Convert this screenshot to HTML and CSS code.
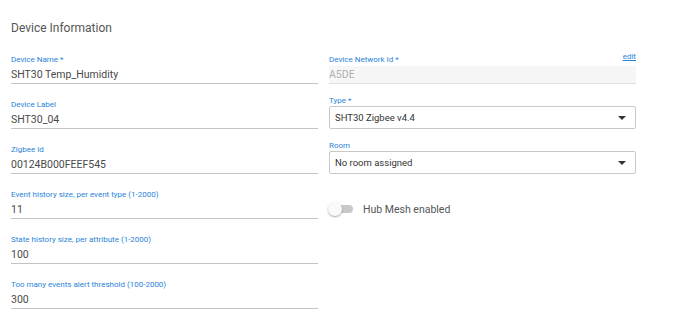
FILE: index.html
```html
<!DOCTYPE html>
<html>
<head>
<meta charset="utf-8">
<link rel="stylesheet" href="styles.css">
</head>
<body>
<div class="page">
  <h2 class="title">Device Information</h2>
  <div class="grid">
    <div class="col">
      <div class="field">
        <div class="label">Device Name *</div>
        <div class="value">SHT30 Temp_Humidity</div>
      </div>
      <div class="field">
        <div class="label">Device Label</div>
        <div class="value">SHT30_04</div>
      </div>
      <div class="field">
        <div class="label">Zigbee Id</div>
        <div class="value">00124B000FEEF545</div>
      </div>
      <div class="field">
        <div class="label">Event history size, per event type (1-2000)</div>
        <div class="value">11</div>
      </div>
      <div class="field">
        <div class="label">State history size, per attribute (1-2000)</div>
        <div class="value">100</div>
      </div>
      <div class="field">
        <div class="label">Too many events alert threshold (100-2000)</div>
        <div class="value">300</div>
      </div>
    </div>
    <div class="col">
      <div class="field first">
        <div class="label-row">
          <div class="label">Device Network Id *</div>
          <a class="edit" href="#">edit</a>
        </div>
        <div class="value readonly">A5DE</div>
      </div>
      <div class="sfield">
        <div class="label">Type *</div>
        <div class="select"><span>SHT30 Zigbee v4.4</span><span class="caret"></span></div>
      </div>
      <div class="sfield">
        <div class="label">Room</div>
        <div class="select"><span>No room assigned</span><span class="caret"></span></div>
      </div>
      <div class="toggle-row">
        <div class="switch"><div class="track"></div><div class="knob"></div></div>
        <span class="toggle-text">Hub Mesh enabled</span>
      </div>
    </div>
  </div>
</div>
</body>
</html>
```
FILE: styles.css
```css
* { box-sizing: border-box; }
html, body { margin: 0; padding: 0; background: #fff; }
body { font-family: Roboto, "Noto Sans", sans-serif; color: #444; }
.page { padding: 18px 0 0 11px; }
.title {
  margin: 0;
  font-size: 12px;
  font-weight: 400;
  line-height: 20px;
  color: #555;
}
.grid {
  display: grid;
  grid-template-columns: 307px 307px;
  column-gap: 11px;
  margin-top: 16px;
  align-items: start;
}
.col { display: flex; flex-direction: column; }
.field { height: 45px; }
.col .field.first { height: 30px; }
.label {
  font-size: 8px;
  line-height: 12px;
  color: #2a84d8;
}
.label-row { display: flex; justify-content: space-between; height: 12px; }
.edit {
  font-size: 8px;
  line-height: 12px;
  color: #2a84d8;
  margin-top: -3px;
}
.value {
  height: 18px;
  font-size: 10.5px;
  line-height: 17px;
  color: #4a4a4a;
  border-bottom: 1px solid #c4c4c4;
}
.value.readonly {
  background: #f6f6f6;
  color: #b0b0b0;
  border-bottom-color: #e0e0e0;
}
.sfield .label { line-height: 10px; margin-top: 12px; }
.select {
  height: 23px;
  border: 1px solid #c8c8c8;
  border-radius: 2px;
  display: flex;
  align-items: center;
  justify-content: space-between;
  padding: 0 9px 0 5px;
  font-size: 9.5px;
  color: #333;
}
.caret {
  width: 0; height: 0;
  border-left: 4px solid transparent;
  border-right: 4px solid transparent;
  border-top: 4px solid #333;
}
.toggle-row {
  display: flex;
  align-items: center;
  margin-top: 28px;
  height: 14px;
}
.switch { position: relative; width: 25px; height: 14px; margin-left: -1px; }
.track {
  position: absolute; left: 3px; top: 3px;
  width: 22px; height: 8px; border-radius: 4px;
  background: #c9c9c9;
}
.knob {
  position: absolute; left: 0; top: 0;
  width: 14px; height: 14px; border-radius: 50%;
  background: #fafafa;
  box-shadow: 0 1px 2px rgba(0,0,0,0.35);
}
.toggle-text { margin-left: 10px; font-size: 10.5px; color: #555; }
```
